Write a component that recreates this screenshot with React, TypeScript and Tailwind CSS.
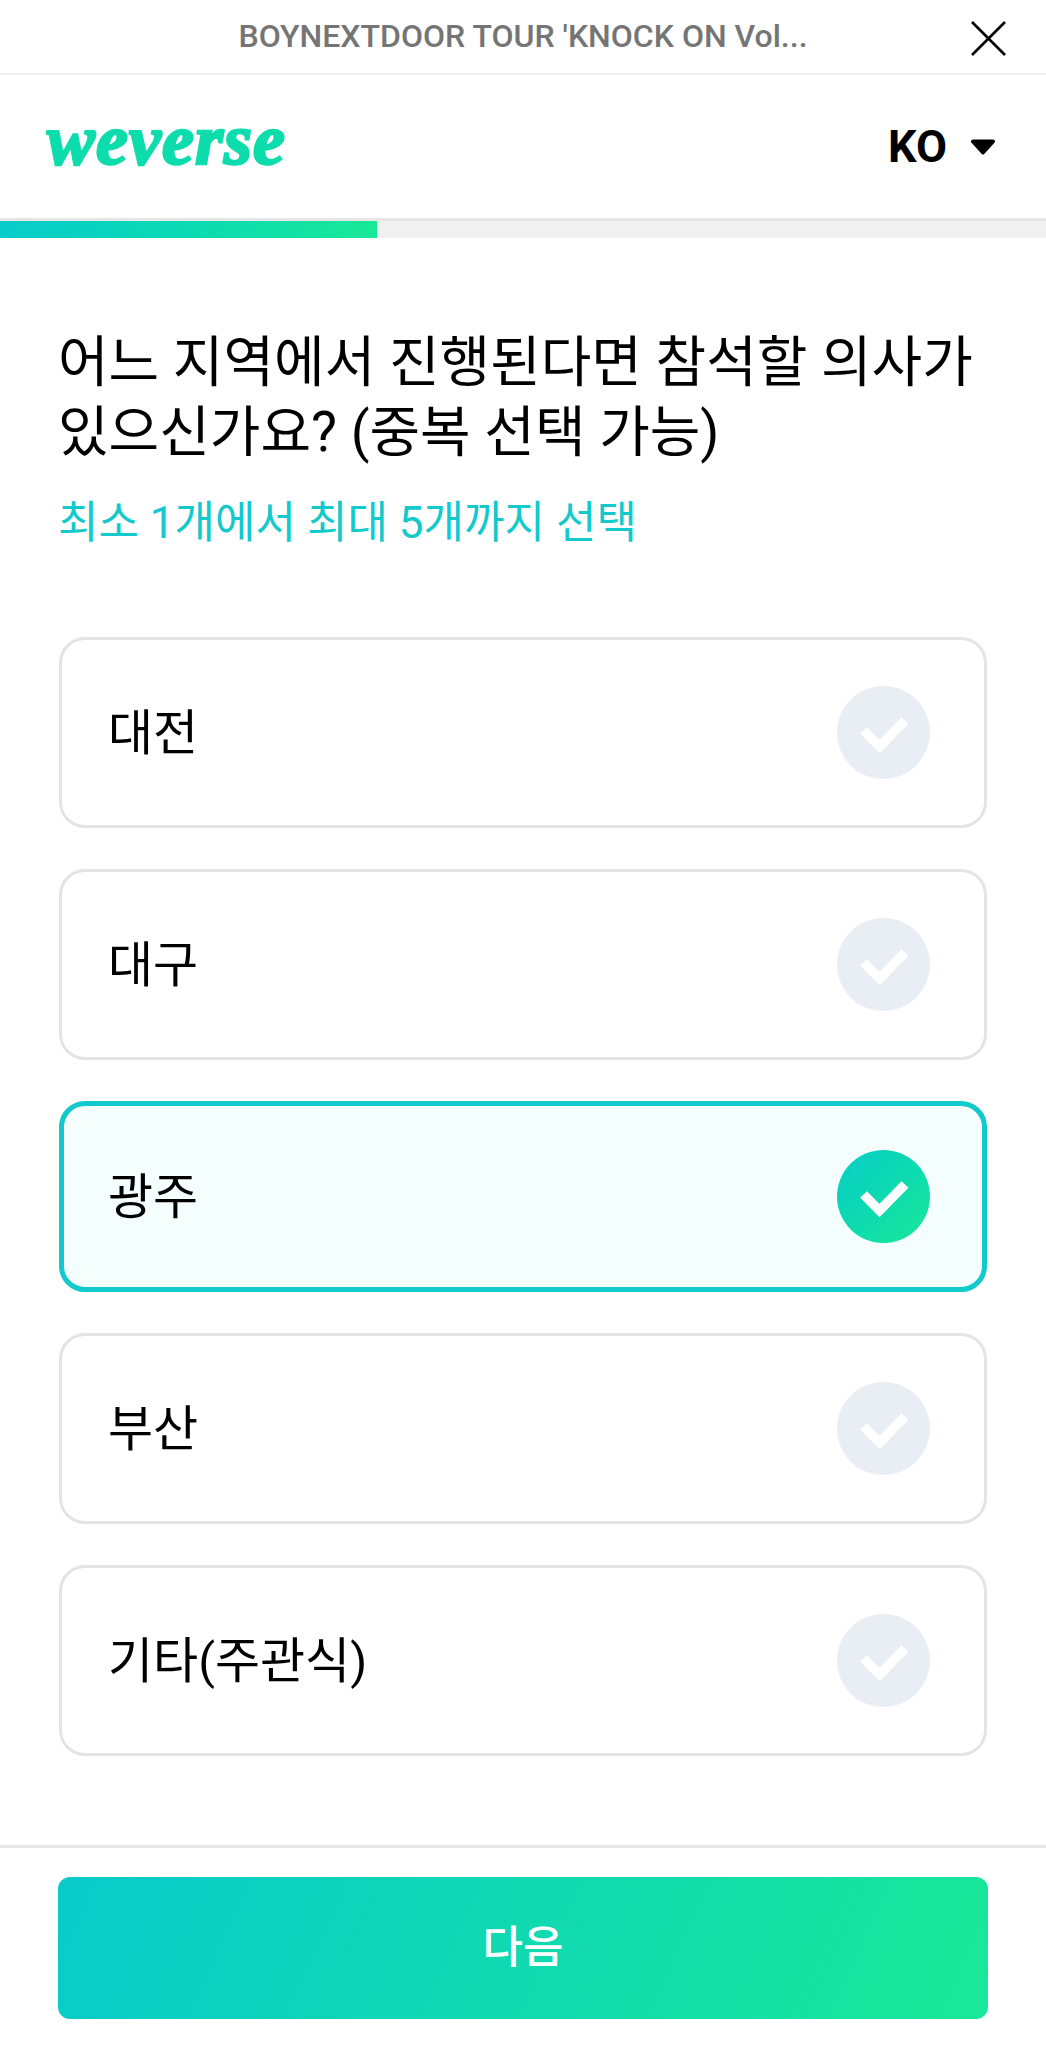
const sans = 'font-["Roboto","Noto_Sans_CJK_KR",sans-serif]'

const options = [
    { label: '대전', selected: false },
    { label: '대구', selected: false },
    { label: '광주', selected: true },
    { label: '부산', selected: false },
    { label: '기타(주관식)', selected: false },
]

function CheckCircle({ selected }: { selected: boolean }) {
    return (
        <div
            className={`flex h-[93px] w-[93px] items-center justify-center rounded-full ${
                selected ? 'bg-linear-to-br from-[#0accc6] to-[#19e897]' : 'bg-[#e9eef5]'
            }`}
        >
            <svg width="93" height="93" viewBox="0 0 93 93" fill="none">
                <path d="M26.5 44.5L42.5 60.5L68 34.5" stroke="white" strokeWidth="9.5" />
            </svg>
        </div>
    )
}

function OptionCard({ label, selected }: { label: string; selected: boolean }) {
    return (
        <div
            className={`flex h-[191px] items-center justify-between rounded-[26px] ${
                selected
                    ? 'border-[5px] border-[#12c9cb] bg-[#f4fffd] pl-[44px] pr-[52px]'
                    : 'border-[3px] border-[#e4e4e4] bg-white pl-[46px] pr-[54px]'
            }`}
        >
            <span className="pt-[3px] text-[49px] leading-[60px] text-black">{label}</span>
            <CheckCircle selected={selected} />
        </div>
    )
}

export default function App() {
    return (
        <div className={`flex h-[2048px] w-[1046px] flex-col overflow-hidden bg-white ${sans}`}>
            <div className="relative flex h-[75px] shrink-0 items-center justify-center border-b-[2px] border-[#f0f0f0] pb-[1px]">
                <span className="text-[32px] font-medium text-[#757575]">BOYNEXTDOOR TOUR 'KNOCK ON Vol...</span>
                <svg className="absolute left-[968px] top-[18px]" width="40" height="40" viewBox="0 0 40 40" fill="none">
                    <path d="M4 4L37 37M37 4L4 37" stroke="black" strokeWidth="2.6" />
                </svg>
            </div>

            <div className="flex h-[146px] shrink-0 items-center justify-between border-b-[3px] border-[#e6e6e6] pl-[47px] pr-[50px]">
                <span className='mb-[14px] font-["Liberation_Serif",serif] text-[72px] font-bold italic leading-none tracking-[1px] text-[#0ddcad] [-webkit-text-stroke:2.5px_#0ddcad]'>
                    weverse
                </span>
                <div className="flex items-center gap-[23px]">
                    <span className="text-[45px] font-bold text-black">KO</span>
                    <svg width="26" height="16" viewBox="0 0 26 16">
                        <path d="M3 2.5H23L13 13.5Z" fill="black" stroke="black" strokeLinejoin="round" strokeWidth="4" />
                    </svg>
                </div>
            </div>

            <div className="h-[17px] shrink-0 bg-[#f0f0f0]">
                <div className="h-full w-[377px] bg-linear-to-r from-[#08cbca] to-[#19e897]" />
            </div>

            <div className="flex-1 pl-[58px] pr-[59px] pt-[89px]">
                <h1 className="text-[55px] font-normal leading-[70px] text-black">
                    어느 지역에서 진행된다면 참석할 의사가
                    <br />
                    있으신가요? (중복 선택 가능)
                </h1>
                <p className="mt-[28px] text-[44px] leading-[56px] text-[#12c9cb]">최소 1개에서 최대 5개까지 선택</p>

                <div className="ml-[1px] mt-[86px] flex flex-col gap-[41px]">
                    {options.map(o => (
                        <OptionCard key={o.label} label={o.label} selected={o.selected} />
                    ))}
                </div>
            </div>

            <div className="h-[203px] shrink-0 border-t-[3px] border-[#e6e6e6] px-[58px] pt-[29px]">
                <button className="flex h-[142px] w-full items-center justify-center rounded-[12px] bg-linear-[115deg] from-[#08cbca] to-[#19e897] text-[44px] font-medium text-white">
                    다음
                </button>
            </div>
        </div>
    )
}
